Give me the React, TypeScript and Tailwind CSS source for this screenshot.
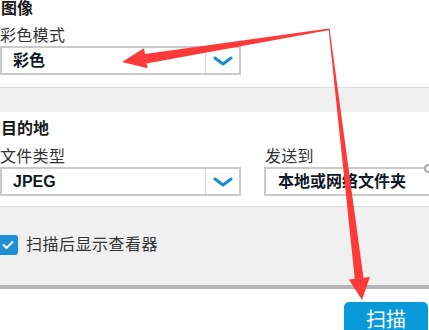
import React from "react";

const font = "font-['Liberation_Sans','Noto_Sans_CJK_SC',sans-serif]";

function Chevron() {
  return (
    <svg width="20" height="10" viewBox="0 0 20 10" fill="none">
      <path
        d="M2 2 L10 8 L18 2"
        stroke="#1b8bd6"
        strokeWidth="3"
        strokeLinecap="round"
        strokeLinejoin="round"
      />
    </svg>
  );
}

interface SelectProps {
  value: string;
  className?: string;
  arrow?: boolean;
  pad?: string;
}

function Select({ value, className = "", arrow = true, pad = "pl-[11px]" }: SelectProps) {
  return (
    <div
      className={`flex h-[29px] items-stretch border-2 border-[#cacaca] bg-white ${className}`}
    >
      <div className={`flex flex-1 items-center ${pad} text-[16px] font-bold text-[#111827]`}>
        {value}
      </div>
      {arrow && (
        <div className="flex w-[34px] items-center justify-center border-l border-[#d2d2d2]">
          <Chevron />
        </div>
      )}
    </div>
  );
}

function Arrows() {
  // annotation arrows drawn over the dialog
  return (
    <svg
      className="pointer-events-none absolute inset-0"
      width="429"
      height="330"
      viewBox="0 0 429 330"
    >
      <g fill="#fd3a3a">
        <polygon points="329,28.5 329.6,30 146.5,63.5 144.8,54" />
        <polygon points="122,62 144,48.3 147.6,68.3" />
        <polygon points="328.6,29 329.6,29 363.5,278 354.8,279" />
        <polygon points="362,300 348.9,279.5 369.9,276.9" />
      </g>
    </svg>
  );
}

export default function App() {
  return (
    <div className={`relative h-[330px] w-[429px] overflow-hidden bg-white ${font}`}>
      {/* 图像 */}
      <div className="border-b border-[#dcdcdc] pb-[12px]">
        <h3 className="h-[17px] pl-[1px] text-[16px] font-bold leading-[17px] text-[#1a1a1a]">
          图像
        </h3>
        <div className="mt-[9px] h-[20px] text-[16px] leading-[20px] tracking-[0.3px] text-[#333]">
          彩色模式
        </div>
        <Select value="彩色" className="w-[241px]" />
      </div>

      <div className="h-[24px] bg-[#f0f0f0]" />

      {/* 目的地 */}
      <div className="border-b border-[#dcdcdc] pb-[10px]">
        <h3 className="mt-[7px] h-[20px] pl-[1px] text-[16px] font-bold leading-[20px] text-[#1a1a1a]">
          目的地
        </h3>
        <div className="mt-[8px] flex gap-[23px]">
          <div className="w-[241px] shrink-0">
            <div className="h-[20px] text-[16px] leading-[20px] tracking-[0.3px] text-[#333]">
              文件类型
            </div>
            <Select value="JPEG" />
          </div>
          <div className="w-[190px] shrink-0">
            <div className="h-[20px] pl-[1px] text-[16px] leading-[20px] tracking-[0.3px] text-[#333]">
              发送到
            </div>
            <Select value="本地或网络文件夹" arrow={false} pad="pl-[12px]" />
          </div>
        </div>
      </div>

      {/* viewer option */}
      <div className="flex h-[78px] items-center bg-[#f0f0f0] pb-[2px]">
        <div className="-ml-[2px] flex h-[20px] w-[20px] items-center justify-center rounded-[3px] bg-[#1f8fd6]">
          <svg width="12" height="10" viewBox="0 0 12 10" fill="none">
            <path
              d="M1.5 5 L4.5 8 L10.5 2"
              stroke="white"
              strokeWidth="2"
              strokeLinecap="round"
              strokeLinejoin="round"
            />
          </svg>
        </div>
        <span className="ml-[8px] text-[16px] tracking-[0.5px] text-[#333]">扫描后显示查看器</span>
      </div>

      <div className="h-[4px] bg-[#b4b4b4]" />

      <div className="flex justify-end pt-[13px]">
        <button className="mr-[1px] h-[34px] w-[84px] rounded-t-[5px] bg-[#0b9ad9] pt-[1px] text-[20px] leading-[32px] text-white">
          扫描
        </button>
      </div>

      <div className="absolute right-[-4px] top-[164px] h-[9px] w-[9px] rounded-full border-2 border-[#a8a8a8] bg-white" />
      <Arrows />
    </div>
  );
}
